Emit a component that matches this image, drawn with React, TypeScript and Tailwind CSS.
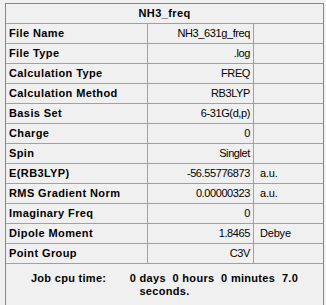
import React from "react";

// ─── Data ─────────────────────────────────────────────────────────────────────

const ROWS: { label: string; value: string; unit?: string }[] = [
  { label: "File Name", value: "NH3_631g_freq" },
  { label: "File Type", value: ".log" },
  { label: "Calculation Type", value: "FREQ" },
  { label: "Calculation Method", value: "RB3LYP" },
  { label: "Basis Set", value: "6-31G(d,p)" },
  { label: "Charge", value: "0" },
  { label: "Spin", value: "Singlet" },
  { label: "E(RB3LYP)", value: "-56.55776873", unit: "a.u." },
  { label: "RMS Gradient Norm", value: "0.00000323", unit: "a.u." },
  { label: "Imaginary Freq", value: "0" },
  { label: "Dipole Moment", value: "1.8465", unit: "Debye" },
  { label: "Point Group", value: "C3V" },
];

// ─── Component ────────────────────────────────────────────────────────────────

export default function App() {
  return (
    <div
      className="h-[305px] w-[326px] overflow-hidden bg-[#f0f0f0] pl-[5px] pt-[3px] text-[11px] text-black"
      style={{ fontFamily: '"Liberation Sans", Arial, sans-serif' }}
    >
      <div className="flex h-[302px] w-[319px] flex-col border-x border-t border-[#828790]">
        {/* Title */}
        <div className="flex h-[20px] items-center justify-center border-b border-[#a0a0a0] font-bold tracking-[0.4px]">
          NH3_freq
        </div>

        {/* Property rows */}
        {ROWS.map((row) => (
          <div
            key={row.label}
            className="grid h-[20px] grid-cols-[142px_106px_69px] border-b border-[#a0a0a0]"
          >
            <div className="flex items-center border-r border-[#a0a0a0] pl-[3px] font-bold tracking-[0.4px]">
              {row.label}
            </div>
            <div className="flex items-center justify-end border-r border-[#a0a0a0] pr-[3px] tracking-[-0.4px]">
              {row.value}
            </div>
            <div className="flex items-center pl-[6px] tracking-[-0.2px]">
              {row.unit}
            </div>
          </div>
        ))}

        {/* Job time */}
        <div className="pt-[8px] text-center font-bold leading-[13px] tracking-[0.3px] whitespace-pre">
          {"Job cpu time:       0 days  0 hours  0 minutes  7.0"}
          <br />
          {"seconds."}
        </div>
      </div>
    </div>
  );
}
